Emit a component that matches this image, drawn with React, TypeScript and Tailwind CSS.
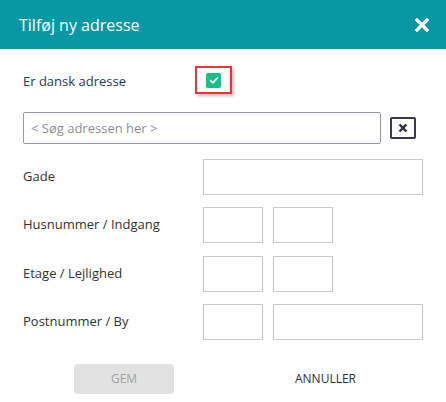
import React from 'react'

const font = { fontFamily: '"Open Sans", "Noto Sans", sans-serif' }

const Box = ({ w }: { w: string }) => (
  <div className={`h-[36px] border border-[#c9c9c9] bg-white ${w}`} />
)

const Row = ({ label, children, className }: { label: string; children: React.ReactNode; className?: string }) => (
  <div className={`flex items-center ${className ?? ''}`}>
    <div className="w-[180px] text-[13px] text-[#333333]">{label}</div>
    <div className="flex gap-[10px]">{children}</div>
  </div>
)

export default function App() {
  return (
    <div className="w-[446px] h-[402px] bg-white overflow-hidden" style={font}>
      <div className="flex h-[49px] items-center justify-between bg-[#0898a3] pl-[19px] pr-[17px]">
        <h1 className="text-[16px] text-white">Tilføj ny adresse</h1>
        <svg width="14" height="14" viewBox="0 0 14 14">
          <path d="M2 2 L12 12 M12 2 L2 12" stroke="white" strokeWidth="3.2" strokeLinecap="square" />
        </svg>
      </div>

      <div className="px-[23px]">
        <div className="mt-[17px] flex items-center">
          <div className="w-[172px] pt-[3px] text-[13px] text-[#1d3a55]">Er dansk adresse</div>
          <div className="flex h-[28px] w-[37px] items-center justify-center border-2 border-[#ec3237] shadow-[2px_2px_3px_rgba(0,0,0,0.25)]">
            <div className="flex h-[15px] w-[15px] items-center justify-center rounded-[2px] bg-[#1fbd85]">
              <svg width="10" height="8" viewBox="0 0 10 8">
                <path d="M1 4 L4 6.8 L9 1.2" stroke="white" strokeWidth="1.6" fill="none" />
              </svg>
            </div>
          </div>
        </div>

        <div className="mt-[18px] flex items-center">
          <input
            placeholder="< Søg adressen her >"
            className="h-[32px] w-[358px] rounded-[2px] border border-[#9a98a6] px-[7px] text-[13px] text-[#333] placeholder:text-[#8f8f8f] outline-none"
          />
          <button className="ml-[9px] flex h-[22px] w-[26px] items-center justify-center rounded-[2px] border-2 border-[#3a3850]">
            <svg width="10" height="10" viewBox="0 0 10 10">
              <path d="M1.5 1.5 L8.5 8.5 M8.5 1.5 L1.5 8.5" stroke="#2d2b3d" strokeWidth="2.4" />
            </svg>
          </button>
        </div>

        <Row label="Gade" className="mt-[15px]">
          <Box w="w-[220px]" />
        </Row>
        <Row label="Husnummer / Indgang" className="mt-[12px]">
          <Box w="w-[60px]" />
          <Box w="w-[60px]" />
        </Row>
        <Row label="Etage / Lejlighed" className="mt-[13px]">
          <Box w="w-[60px]" />
          <Box w="w-[60px]" />
        </Row>
        <Row label="Postnummer / By" className="mt-[12px]">
          <Box w="w-[60px]" />
          <Box w="w-[150px]" />
        </Row>

        <div className="mt-[24px] flex items-center">
          <button className="ml-[51px] h-[30px] w-[100px] rounded-[4px] bg-[#e2e2e2] text-[12px] text-[#a4a4a4]">GEM</button>
          <button className="ml-[121px] text-[12px] text-[#2f2d40]">ANNULLER</button>
        </div>
      </div>
    </div>
  )
}
